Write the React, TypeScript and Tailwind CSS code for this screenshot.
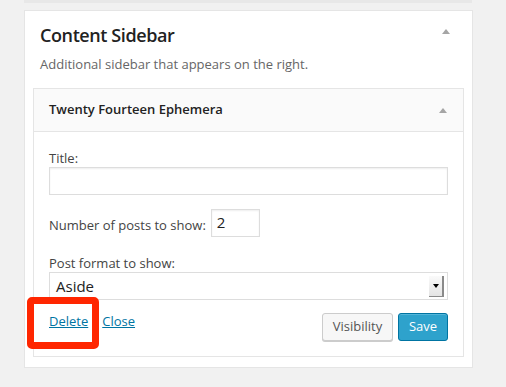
const Arrow = () => (
  <span className="block w-0 h-0 border-l-[4px] border-r-[4px] border-b-[5px] border-l-transparent border-r-transparent border-b-[#a5a5a5]" />
);

const App = () => {
  return (
    <div
      className="relative w-[506px] h-[387px] overflow-hidden bg-[#f1f1f1] text-[13px] text-[#444]"
      style={{ fontFamily: '"Open Sans", "Liberation Sans", sans-serif' }}
    >
      {/* previous card edge */}
      <div className="ml-[24px] w-[448px] h-[3px] bg-[#e8e8e8]" />

      {/* Content Sidebar card */}
      <div className="ml-[24px] mt-[7px] w-[449px] bg-white border border-[#e5e5e5] pb-[10px]">
        <div className="flex items-start justify-between pl-[15px] pr-[22px]">
          <div>
            <h2 className="mt-[12px] text-[18px] leading-[24px] font-semibold tracking-[-0.4px] text-[#222]">Content Sidebar</h2>
            <p className="mt-[8px] leading-[18px] text-[#666]">Additional sidebar that appears on the right.</p>
          </div>
          <div className="mt-[18px]">
            <Arrow />
          </div>
        </div>

        {/* widget */}
        <div className="ml-[8px] mt-[15px] w-[431px] border border-[#e5e5e5]">
          <div className="flex items-center justify-between h-[43px] bg-[#fafafa] border-b border-[#e5e5e5] pl-[15px] pr-[16px]">
            <span className="font-semibold text-[#222]">Twenty Fourteen Ephemera</span>
            <Arrow />
          </div>

          <div className="px-[15px] pt-[17px] pb-[15px]">
            <div className="leading-[18px]">Title:</div>
            <div className="h-[28px] w-full border border-[#ddd] shadow-[inset_0_1px_2px_rgba(0,0,0,0.07)]" />

            <div className="flex items-end mt-[14px]">
              <span className="leading-[18px] mb-[3px] mr-[5px]">Number of posts to show:</span>
              <div className="h-[28px] w-[49px] border border-[#ddd] shadow-[inset_0_1px_2px_rgba(0,0,0,0.07)] pl-[5px] text-[15px] leading-[24px] text-[#222]">
                2
              </div>
            </div>

            <div className="mt-[17px] leading-[18px]">Post format to show:</div>
            <div className="flex items-center justify-between h-[28px] w-full border border-[#ddd] pl-[6px] pr-[3px]">
              <span className="text-[15px] text-[#222]">Aside</span>
              <span className="flex items-center justify-center w-[15px] h-[21px] bg-gradient-to-b from-[#fafafa] to-[#e4e4e4] border-r-2 border-b border-[#8a8a8a]">
                <span className="block w-0 h-0 border-l-[3px] border-r-[3px] border-t-[4px] border-l-transparent border-r-transparent border-t-black" />
              </span>
            </div>

            <div className="flex items-start justify-between mt-[13px]">
              <div className="flex gap-[14px] leading-[18px] -mt-[1px]">
                <a href="#" className="text-[#0074a2] underline">Delete</a>
                <a href="#" className="text-[#0074a2] underline">Close</a>
              </div>
              <div className="flex gap-[5px]">
                <button className="h-[28px] w-[71px] rounded-[3px] border border-[#ccc] bg-[#f7f7f7] text-[#555] shadow-[0_1px_0_#ccc]">
                  Visibility
                </button>
                <button className="h-[28px] w-[50px] rounded-[3px] border border-[#0074a2] bg-[#2ea2cc] text-white shadow-[inset_0_1px_0_rgba(120,200,230,0.5)]">
                  Save
                </button>
              </div>
            </div>
          </div>
        </div>
      </div>

      {/* highlight annotation */}
      <div className="absolute left-[27px] top-[297px] w-[72px] h-[52px] border-[7px] border-[#ff2600] rounded-[5px]" />
    </div>
  );
};

export default App;
